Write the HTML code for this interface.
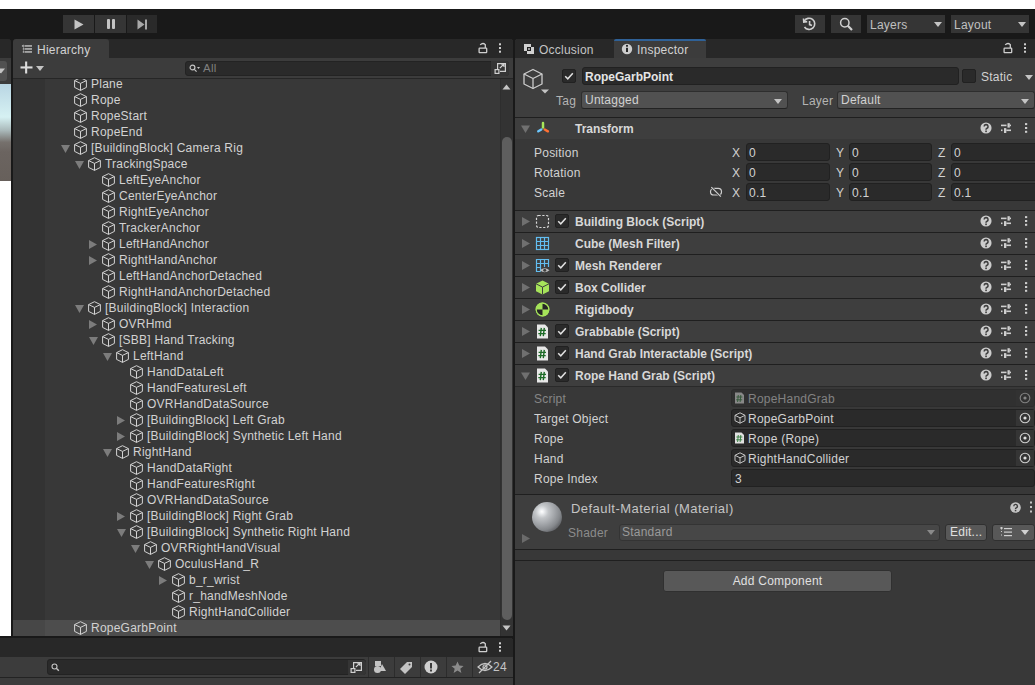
<!DOCTYPE html><html><head><meta charset="utf-8"><style>

*{box-sizing:border-box}
html,body{margin:0;padding:0}
body{width:1035px;height:685px;overflow:hidden;position:relative;background:#191919;font-family:"Liberation Sans", sans-serif;font-size:12px;letter-spacing:0.23px;color:#d2d2d2}
.a{position:absolute}
.t{position:absolute;white-space:nowrap;line-height:16px}
.b{font-weight:bold;font-size:12px;letter-spacing:0}

</style></head><body>
<div class="a" style="left:0;top:0;width:1035px;height:9px;background:#fff"></div>
<div class="a" style="left:63px;top:15px;width:31px;height:18px;background:#353535"></div>
<div class="a" style="left:95px;top:15px;width:31px;height:18px;background:#353535"></div>
<div class="a" style="left:127px;top:15px;width:30px;height:18px;background:#2a2a2a"></div>
<svg class="a" style="left:74px;top:19px" width="10" height="11"><path d="M0.5 0.5 L9.5 5.5 L0.5 10.5Z" fill="#c4c4c4"/></svg>
<div class="a" style="left:107px;top:19px;width:3px;height:10px;background:#c4c4c4;border-radius:1px"></div>
<div class="a" style="left:112px;top:19px;width:3px;height:10px;background:#c4c4c4;border-radius:1px"></div>
<svg class="a" style="left:137px;top:19px" width="11" height="11"><path d="M0.5 0.5 L7.5 5.5 L0.5 10.5Z" fill="#a8a8a8"/><rect x="8" y="0.5" width="2" height="10" fill="#a8a8a8"/></svg>
<div class="a" style="left:795px;top:15px;width:30px;height:18px;background:#353535"></div>
<svg class="a" style="left:801px;top:16px" width="17" height="16" viewBox="0 0 17 16"><g fill="none" stroke="#d0d0d0" stroke-width="1.6"><path d="M3.2 5.2 A5.6 5.6 0 1 1 3.5 11"/><path d="M2.5 2.5 L2.8 6 L6.2 5.6"/><path d="M8.6 5 L8.6 8.6 L11 9.6"/></g></svg>
<div class="a" style="left:831px;top:15px;width:30px;height:18px;background:#353535"></div>
<svg class="a" style="left:839px;top:17px" width="15" height="15" viewBox="0 0 15 15"><g fill="none" stroke="#d0d0d0"><circle cx="5.8" cy="5.8" r="4.2" stroke-width="1.5"/><path d="M8.8 8.8 L13 13" stroke-width="2.2"/></g></svg>
<div class="a" style="left:867px;top:15px;width:78px;height:18px;background:#353535"></div>
<div class="t" style="left:870px;top:17px;color:#c0c0c0">Layers</div>
<svg class="a" style="left:934px;top:22px" width="8" height="5" viewBox="0 0 8 5"><path d="M0 0 L8 0 L4 5 Z" fill="#c4c4c4"/></svg>
<div class="a" style="left:951px;top:15px;width:78px;height:18px;background:#353535"></div>
<div class="t" style="left:954px;top:17px;color:#c0c0c0">Layout</div>
<svg class="a" style="left:1018px;top:22px" width="8" height="5" viewBox="0 0 8 5"><path d="M0 0 L8 0 L4 5 Z" fill="#c4c4c4"/></svg>
<div class="a" style="left:0;top:39px;width:11px;height:597px;background:#282828;overflow:hidden;border-top-right-radius:3px"><div class="a" style="left:0;top:45px;width:11px;height:552px;background:#fff"></div><div class="a" style="left:0;top:0;width:11px;height:19px;background:#282828"></div><div class="a" style="left:0;top:19px;width:11px;height:26px;background:#3c3c3c"></div><div class="a" style="left:-6px;top:22px;width:13px;height:20px;background:#515151;border-radius:3px"></div><svg class="a" style="left:0;top:29px" width="6" height="6"><path d="M-3 0.5 L5 0.5 L1 5.5Z" fill="#c4c4c4"/></svg><div class="a" style="left:0;top:45px;width:11px;height:97px;background:linear-gradient(#b9d6e3 0%,#d6f1f3 34%,#a9b8b9 48%,#76716d 60%,#6b6460 70%,#67605b 100%)"></div></div>
<div class="a" style="left:13px;top:39px;width:500px;height:597px;background:#383838;overflow:hidden;border-top-left-radius:3px;border-top-right-radius:3px">
<div class="a" style="left:0;top:0;width:500px;height:19px;background:#282828"></div>
<div class="a" style="left:0;top:0;width:96px;height:19px;background:#3c3c3c;border-top-left-radius:3px;border-top-right-radius:3px"></div>
<svg class="a" style="left:8px;top:5px" width="12" height="11" viewBox="0 0 12 11"><g fill="#cfcfcf"><path d="M0.6 1.9 L2.6 0.6 V3.2Z"/><rect x="3.5" y="1.3" width="7.5" height="1.3"/><rect x="3.5" y="4.3" width="7.5" height="1.3"/><rect x="3.5" y="7.3" width="7.5" height="1.3"/><rect x="1.8" y="4.3" width="1.2" height="1.3"/><rect x="1.8" y="7.3" width="1.2" height="1.3"/><rect x="2" y="3.2" width="0.8" height="0.8" opacity="0.6"/><rect x="2" y="6.2" width="0.8" height="0.8" opacity="0.6"/></g></svg>
<div class="t" style="left:24px;top:3px;color:#d2d2d2">Hierarchy</div>
<svg class="a" style="left:465px;top:3px" width="10" height="12" viewBox="0 0 10 12"><g fill="none" stroke="#cfcfcf" stroke-width="1.3"><rect x="1.1" y="6.1" width="7.6" height="4.6" rx="0.6"/><path d="M2.2 2.9 Q4.8 0.2 7.3 2.6 V6"/></g></svg>
<svg class="a" style="left:485px;top:3px" width="4" height="13"><g fill="#cfcfcf"><rect x="1" y="1.3" width="2" height="2"/><rect x="1" y="5" width="2" height="2"/><rect x="1" y="8.7" width="2" height="2"/></g></svg>
<div class="a" style="left:0;top:19px;width:500px;height:20px;background:#3c3c3c"></div>
<svg class="a" style="left:7px;top:22px" width="13" height="13"><g fill="#dcdcdc"><rect x="5.1" y="0.5" width="2.1" height="12"/><rect x="0.5" y="5.4" width="12" height="2.1"/></g></svg>
<svg class="a" style="left:23px;top:27px" width="8" height="5" viewBox="0 0 8 5"><path d="M0 0 L8 0 L4 5 Z" fill="#c4c4c4"/></svg>
<div class="a" style="left:172px;top:22px;width:324px;height:15px;background:#2a2a2a;border:1px solid #232323;border-radius:3px"></div>
<div class="a" style="left:478px;top:22px;width:18px;height:15px;background:#353535;border-radius:0 3px 3px 0"></div>
<svg class="a" style="left:176px;top:25px" width="12" height="9" viewBox="0 0 12 9"><g fill="none" stroke="#c4c4c4" stroke-width="1.2"><circle cx="3.5" cy="3.5" r="2.4"/><path d="M5.3 5.3 L7.6 7.6"/></g><path d="M8 3 L11 3 L9.5 5Z" fill="#c4c4c4"/></svg>
<div class="t" style="left:190px;top:21px;color:#7f7f7f;font-size:11.5px">All</div>
<svg class="a" style="left:481px;top:23px" width="13" height="13" viewBox="0 0 13 13"><g fill="none" stroke="#d0d0d0" stroke-width="1.2"><path d="M3.6 7 V1.6 H11.4 V9.4 H6"/><rect x="1.1" y="7.6" width="3.8" height="3.8"/><path d="M5.8 6.2 L10 2 M7 2 H10 V5"/></g></svg>
<div class="a" style="left:0;top:39px;width:500px;height:1px;background:#262626"></div>
<div class="a" style="left:0;top:40px;width:500px;height:557px;overflow:hidden">
<div class="a" style="left:0;top:0;width:32px;height:557px;background:#333333"></div>
<div class="a" style="left:61px;top:-2px;width:14px;height:15px"><svg width="13" height="14" viewBox="0 0 13 14"><g fill="none" stroke="#d2d2d2" stroke-width="1" stroke-linejoin="round"><path d="M6.5 0.7 L12.4 3.6 L12.4 10.4 L6.5 13.4 L0.6 10.4 L0.6 3.6 Z"/><path d="M0.6 3.6 L6.5 6.4 L12.4 3.6 M6.5 6.4 L6.5 13.4"/></g></svg></div>
<div class="t" style="left:78px;top:-3px">Plane</div>
<div class="a" style="left:61px;top:14px;width:14px;height:15px"><svg width="13" height="14" viewBox="0 0 13 14"><g fill="none" stroke="#d2d2d2" stroke-width="1" stroke-linejoin="round"><path d="M6.5 0.7 L12.4 3.6 L12.4 10.4 L6.5 13.4 L0.6 10.4 L0.6 3.6 Z"/><path d="M0.6 3.6 L6.5 6.4 L12.4 3.6 M6.5 6.4 L6.5 13.4"/></g></svg></div>
<div class="t" style="left:78px;top:13px">Rope</div>
<div class="a" style="left:61px;top:30px;width:14px;height:15px"><svg width="13" height="14" viewBox="0 0 13 14"><g fill="none" stroke="#d2d2d2" stroke-width="1" stroke-linejoin="round"><path d="M6.5 0.7 L12.4 3.6 L12.4 10.4 L6.5 13.4 L0.6 10.4 L0.6 3.6 Z"/><path d="M0.6 3.6 L6.5 6.4 L12.4 3.6 M6.5 6.4 L6.5 13.4"/></g></svg></div>
<div class="t" style="left:78px;top:29px">RopeStart</div>
<div class="a" style="left:61px;top:46px;width:14px;height:15px"><svg width="13" height="14" viewBox="0 0 13 14"><g fill="none" stroke="#d2d2d2" stroke-width="1" stroke-linejoin="round"><path d="M6.5 0.7 L12.4 3.6 L12.4 10.4 L6.5 13.4 L0.6 10.4 L0.6 3.6 Z"/><path d="M0.6 3.6 L6.5 6.4 L12.4 3.6 M6.5 6.4 L6.5 13.4"/></g></svg></div>
<div class="t" style="left:78px;top:45px">RopeEnd</div>
<svg class="a" style="left:48px;top:66px" width="9" height="8" viewBox="0 0 9 8"><path d="M0 0 L9 0 L4.5 8 Z" fill="#7c7c7c"/></svg>
<div class="a" style="left:61px;top:62px;width:14px;height:15px"><svg width="13" height="14" viewBox="0 0 13 14"><g fill="none" stroke="#d2d2d2" stroke-width="1" stroke-linejoin="round"><path d="M6.5 0.7 L12.4 3.6 L12.4 10.4 L6.5 13.4 L0.6 10.4 L0.6 3.6 Z"/><path d="M0.6 3.6 L6.5 6.4 L12.4 3.6 M6.5 6.4 L6.5 13.4"/></g></svg></div>
<div class="t" style="left:78px;top:61px">[BuildingBlock] Camera Rig</div>
<svg class="a" style="left:62px;top:82px" width="9" height="8" viewBox="0 0 9 8"><path d="M0 0 L9 0 L4.5 8 Z" fill="#7c7c7c"/></svg>
<div class="a" style="left:75px;top:78px;width:14px;height:15px"><svg width="13" height="14" viewBox="0 0 13 14"><g fill="none" stroke="#d2d2d2" stroke-width="1" stroke-linejoin="round"><path d="M6.5 0.7 L12.4 3.6 L12.4 10.4 L6.5 13.4 L0.6 10.4 L0.6 3.6 Z"/><path d="M0.6 3.6 L6.5 6.4 L12.4 3.6 M6.5 6.4 L6.5 13.4"/></g></svg></div>
<div class="t" style="left:92px;top:77px">TrackingSpace</div>
<div class="a" style="left:89px;top:94px;width:14px;height:15px"><svg width="13" height="14" viewBox="0 0 13 14"><g fill="none" stroke="#d2d2d2" stroke-width="1" stroke-linejoin="round"><path d="M6.5 0.7 L12.4 3.6 L12.4 10.4 L6.5 13.4 L0.6 10.4 L0.6 3.6 Z"/><path d="M0.6 3.6 L6.5 6.4 L12.4 3.6 M6.5 6.4 L6.5 13.4"/></g></svg></div>
<div class="t" style="left:106px;top:93px">LeftEyeAnchor</div>
<div class="a" style="left:89px;top:110px;width:14px;height:15px"><svg width="13" height="14" viewBox="0 0 13 14"><g fill="none" stroke="#d2d2d2" stroke-width="1" stroke-linejoin="round"><path d="M6.5 0.7 L12.4 3.6 L12.4 10.4 L6.5 13.4 L0.6 10.4 L0.6 3.6 Z"/><path d="M0.6 3.6 L6.5 6.4 L12.4 3.6 M6.5 6.4 L6.5 13.4"/></g></svg></div>
<div class="t" style="left:106px;top:109px">CenterEyeAnchor</div>
<div class="a" style="left:89px;top:126px;width:14px;height:15px"><svg width="13" height="14" viewBox="0 0 13 14"><g fill="none" stroke="#d2d2d2" stroke-width="1" stroke-linejoin="round"><path d="M6.5 0.7 L12.4 3.6 L12.4 10.4 L6.5 13.4 L0.6 10.4 L0.6 3.6 Z"/><path d="M0.6 3.6 L6.5 6.4 L12.4 3.6 M6.5 6.4 L6.5 13.4"/></g></svg></div>
<div class="t" style="left:106px;top:125px">RightEyeAnchor</div>
<div class="a" style="left:89px;top:142px;width:14px;height:15px"><svg width="13" height="14" viewBox="0 0 13 14"><g fill="none" stroke="#d2d2d2" stroke-width="1" stroke-linejoin="round"><path d="M6.5 0.7 L12.4 3.6 L12.4 10.4 L6.5 13.4 L0.6 10.4 L0.6 3.6 Z"/><path d="M0.6 3.6 L6.5 6.4 L12.4 3.6 M6.5 6.4 L6.5 13.4"/></g></svg></div>
<div class="t" style="left:106px;top:141px">TrackerAnchor</div>
<svg class="a" style="left:76px;top:161px" width="8" height="9" viewBox="0 0 8 9"><path d="M0 0 L8 4.5 L0 9 Z" fill="#7c7c7c"/></svg>
<div class="a" style="left:89px;top:158px;width:14px;height:15px"><svg width="13" height="14" viewBox="0 0 13 14"><g fill="none" stroke="#d2d2d2" stroke-width="1" stroke-linejoin="round"><path d="M6.5 0.7 L12.4 3.6 L12.4 10.4 L6.5 13.4 L0.6 10.4 L0.6 3.6 Z"/><path d="M0.6 3.6 L6.5 6.4 L12.4 3.6 M6.5 6.4 L6.5 13.4"/></g></svg></div>
<div class="t" style="left:106px;top:157px">LeftHandAnchor</div>
<svg class="a" style="left:76px;top:177px" width="8" height="9" viewBox="0 0 8 9"><path d="M0 0 L8 4.5 L0 9 Z" fill="#7c7c7c"/></svg>
<div class="a" style="left:89px;top:174px;width:14px;height:15px"><svg width="13" height="14" viewBox="0 0 13 14"><g fill="none" stroke="#d2d2d2" stroke-width="1" stroke-linejoin="round"><path d="M6.5 0.7 L12.4 3.6 L12.4 10.4 L6.5 13.4 L0.6 10.4 L0.6 3.6 Z"/><path d="M0.6 3.6 L6.5 6.4 L12.4 3.6 M6.5 6.4 L6.5 13.4"/></g></svg></div>
<div class="t" style="left:106px;top:173px">RightHandAnchor</div>
<div class="a" style="left:89px;top:190px;width:14px;height:15px"><svg width="13" height="14" viewBox="0 0 13 14"><g fill="none" stroke="#d2d2d2" stroke-width="1" stroke-linejoin="round"><path d="M6.5 0.7 L12.4 3.6 L12.4 10.4 L6.5 13.4 L0.6 10.4 L0.6 3.6 Z"/><path d="M0.6 3.6 L6.5 6.4 L12.4 3.6 M6.5 6.4 L6.5 13.4"/></g></svg></div>
<div class="t" style="left:106px;top:189px">LeftHandAnchorDetached</div>
<div class="a" style="left:89px;top:206px;width:14px;height:15px"><svg width="13" height="14" viewBox="0 0 13 14"><g fill="none" stroke="#d2d2d2" stroke-width="1" stroke-linejoin="round"><path d="M6.5 0.7 L12.4 3.6 L12.4 10.4 L6.5 13.4 L0.6 10.4 L0.6 3.6 Z"/><path d="M0.6 3.6 L6.5 6.4 L12.4 3.6 M6.5 6.4 L6.5 13.4"/></g></svg></div>
<div class="t" style="left:106px;top:205px">RightHandAnchorDetached</div>
<svg class="a" style="left:62px;top:226px" width="9" height="8" viewBox="0 0 9 8"><path d="M0 0 L9 0 L4.5 8 Z" fill="#7c7c7c"/></svg>
<div class="a" style="left:75px;top:222px;width:14px;height:15px"><svg width="13" height="14" viewBox="0 0 13 14"><g fill="none" stroke="#d2d2d2" stroke-width="1" stroke-linejoin="round"><path d="M6.5 0.7 L12.4 3.6 L12.4 10.4 L6.5 13.4 L0.6 10.4 L0.6 3.6 Z"/><path d="M0.6 3.6 L6.5 6.4 L12.4 3.6 M6.5 6.4 L6.5 13.4"/></g></svg></div>
<div class="t" style="left:92px;top:221px">[BuildingBlock] Interaction</div>
<svg class="a" style="left:76px;top:241px" width="8" height="9" viewBox="0 0 8 9"><path d="M0 0 L8 4.5 L0 9 Z" fill="#7c7c7c"/></svg>
<div class="a" style="left:89px;top:238px;width:14px;height:15px"><svg width="13" height="14" viewBox="0 0 13 14"><g fill="none" stroke="#d2d2d2" stroke-width="1" stroke-linejoin="round"><path d="M6.5 0.7 L12.4 3.6 L12.4 10.4 L6.5 13.4 L0.6 10.4 L0.6 3.6 Z"/><path d="M0.6 3.6 L6.5 6.4 L12.4 3.6 M6.5 6.4 L6.5 13.4"/></g></svg></div>
<div class="t" style="left:106px;top:237px">OVRHmd</div>
<svg class="a" style="left:76px;top:258px" width="9" height="8" viewBox="0 0 9 8"><path d="M0 0 L9 0 L4.5 8 Z" fill="#7c7c7c"/></svg>
<div class="a" style="left:89px;top:254px;width:14px;height:15px"><svg width="13" height="14" viewBox="0 0 13 14"><g fill="none" stroke="#d2d2d2" stroke-width="1" stroke-linejoin="round"><path d="M6.5 0.7 L12.4 3.6 L12.4 10.4 L6.5 13.4 L0.6 10.4 L0.6 3.6 Z"/><path d="M0.6 3.6 L6.5 6.4 L12.4 3.6 M6.5 6.4 L6.5 13.4"/></g></svg></div>
<div class="t" style="left:106px;top:253px">[SBB] Hand Tracking</div>
<svg class="a" style="left:90px;top:274px" width="9" height="8" viewBox="0 0 9 8"><path d="M0 0 L9 0 L4.5 8 Z" fill="#7c7c7c"/></svg>
<div class="a" style="left:103px;top:270px;width:14px;height:15px"><svg width="13" height="14" viewBox="0 0 13 14"><g fill="none" stroke="#d2d2d2" stroke-width="1" stroke-linejoin="round"><path d="M6.5 0.7 L12.4 3.6 L12.4 10.4 L6.5 13.4 L0.6 10.4 L0.6 3.6 Z"/><path d="M0.6 3.6 L6.5 6.4 L12.4 3.6 M6.5 6.4 L6.5 13.4"/></g></svg></div>
<div class="t" style="left:120px;top:269px">LeftHand</div>
<div class="a" style="left:117px;top:286px;width:14px;height:15px"><svg width="13" height="14" viewBox="0 0 13 14"><g fill="none" stroke="#d2d2d2" stroke-width="1" stroke-linejoin="round"><path d="M6.5 0.7 L12.4 3.6 L12.4 10.4 L6.5 13.4 L0.6 10.4 L0.6 3.6 Z"/><path d="M0.6 3.6 L6.5 6.4 L12.4 3.6 M6.5 6.4 L6.5 13.4"/></g></svg></div>
<div class="t" style="left:134px;top:285px">HandDataLeft</div>
<div class="a" style="left:117px;top:302px;width:14px;height:15px"><svg width="13" height="14" viewBox="0 0 13 14"><g fill="none" stroke="#d2d2d2" stroke-width="1" stroke-linejoin="round"><path d="M6.5 0.7 L12.4 3.6 L12.4 10.4 L6.5 13.4 L0.6 10.4 L0.6 3.6 Z"/><path d="M0.6 3.6 L6.5 6.4 L12.4 3.6 M6.5 6.4 L6.5 13.4"/></g></svg></div>
<div class="t" style="left:134px;top:301px">HandFeaturesLeft</div>
<div class="a" style="left:117px;top:318px;width:14px;height:15px"><svg width="13" height="14" viewBox="0 0 13 14"><g fill="none" stroke="#d2d2d2" stroke-width="1" stroke-linejoin="round"><path d="M6.5 0.7 L12.4 3.6 L12.4 10.4 L6.5 13.4 L0.6 10.4 L0.6 3.6 Z"/><path d="M0.6 3.6 L6.5 6.4 L12.4 3.6 M6.5 6.4 L6.5 13.4"/></g></svg></div>
<div class="t" style="left:134px;top:317px">OVRHandDataSource</div>
<svg class="a" style="left:104px;top:337px" width="8" height="9" viewBox="0 0 8 9"><path d="M0 0 L8 4.5 L0 9 Z" fill="#7c7c7c"/></svg>
<div class="a" style="left:117px;top:334px;width:14px;height:15px"><svg width="13" height="14" viewBox="0 0 13 14"><g fill="none" stroke="#d2d2d2" stroke-width="1" stroke-linejoin="round"><path d="M6.5 0.7 L12.4 3.6 L12.4 10.4 L6.5 13.4 L0.6 10.4 L0.6 3.6 Z"/><path d="M0.6 3.6 L6.5 6.4 L12.4 3.6 M6.5 6.4 L6.5 13.4"/></g></svg></div>
<div class="t" style="left:134px;top:333px">[BuildingBlock] Left Grab</div>
<svg class="a" style="left:104px;top:353px" width="8" height="9" viewBox="0 0 8 9"><path d="M0 0 L8 4.5 L0 9 Z" fill="#7c7c7c"/></svg>
<div class="a" style="left:117px;top:350px;width:14px;height:15px"><svg width="13" height="14" viewBox="0 0 13 14"><g fill="none" stroke="#d2d2d2" stroke-width="1" stroke-linejoin="round"><path d="M6.5 0.7 L12.4 3.6 L12.4 10.4 L6.5 13.4 L0.6 10.4 L0.6 3.6 Z"/><path d="M0.6 3.6 L6.5 6.4 L12.4 3.6 M6.5 6.4 L6.5 13.4"/></g></svg></div>
<div class="t" style="left:134px;top:349px">[BuildingBlock] Synthetic Left Hand</div>
<svg class="a" style="left:90px;top:370px" width="9" height="8" viewBox="0 0 9 8"><path d="M0 0 L9 0 L4.5 8 Z" fill="#7c7c7c"/></svg>
<div class="a" style="left:103px;top:366px;width:14px;height:15px"><svg width="13" height="14" viewBox="0 0 13 14"><g fill="none" stroke="#d2d2d2" stroke-width="1" stroke-linejoin="round"><path d="M6.5 0.7 L12.4 3.6 L12.4 10.4 L6.5 13.4 L0.6 10.4 L0.6 3.6 Z"/><path d="M0.6 3.6 L6.5 6.4 L12.4 3.6 M6.5 6.4 L6.5 13.4"/></g></svg></div>
<div class="t" style="left:120px;top:365px">RightHand</div>
<div class="a" style="left:117px;top:382px;width:14px;height:15px"><svg width="13" height="14" viewBox="0 0 13 14"><g fill="none" stroke="#d2d2d2" stroke-width="1" stroke-linejoin="round"><path d="M6.5 0.7 L12.4 3.6 L12.4 10.4 L6.5 13.4 L0.6 10.4 L0.6 3.6 Z"/><path d="M0.6 3.6 L6.5 6.4 L12.4 3.6 M6.5 6.4 L6.5 13.4"/></g></svg></div>
<div class="t" style="left:134px;top:381px">HandDataRight</div>
<div class="a" style="left:117px;top:398px;width:14px;height:15px"><svg width="13" height="14" viewBox="0 0 13 14"><g fill="none" stroke="#d2d2d2" stroke-width="1" stroke-linejoin="round"><path d="M6.5 0.7 L12.4 3.6 L12.4 10.4 L6.5 13.4 L0.6 10.4 L0.6 3.6 Z"/><path d="M0.6 3.6 L6.5 6.4 L12.4 3.6 M6.5 6.4 L6.5 13.4"/></g></svg></div>
<div class="t" style="left:134px;top:397px">HandFeaturesRight</div>
<div class="a" style="left:117px;top:414px;width:14px;height:15px"><svg width="13" height="14" viewBox="0 0 13 14"><g fill="none" stroke="#d2d2d2" stroke-width="1" stroke-linejoin="round"><path d="M6.5 0.7 L12.4 3.6 L12.4 10.4 L6.5 13.4 L0.6 10.4 L0.6 3.6 Z"/><path d="M0.6 3.6 L6.5 6.4 L12.4 3.6 M6.5 6.4 L6.5 13.4"/></g></svg></div>
<div class="t" style="left:134px;top:413px">OVRHandDataSource</div>
<svg class="a" style="left:104px;top:433px" width="8" height="9" viewBox="0 0 8 9"><path d="M0 0 L8 4.5 L0 9 Z" fill="#7c7c7c"/></svg>
<div class="a" style="left:117px;top:430px;width:14px;height:15px"><svg width="13" height="14" viewBox="0 0 13 14"><g fill="none" stroke="#d2d2d2" stroke-width="1" stroke-linejoin="round"><path d="M6.5 0.7 L12.4 3.6 L12.4 10.4 L6.5 13.4 L0.6 10.4 L0.6 3.6 Z"/><path d="M0.6 3.6 L6.5 6.4 L12.4 3.6 M6.5 6.4 L6.5 13.4"/></g></svg></div>
<div class="t" style="left:134px;top:429px">[BuildingBlock] Right Grab</div>
<svg class="a" style="left:104px;top:450px" width="9" height="8" viewBox="0 0 9 8"><path d="M0 0 L9 0 L4.5 8 Z" fill="#7c7c7c"/></svg>
<div class="a" style="left:117px;top:446px;width:14px;height:15px"><svg width="13" height="14" viewBox="0 0 13 14"><g fill="none" stroke="#d2d2d2" stroke-width="1" stroke-linejoin="round"><path d="M6.5 0.7 L12.4 3.6 L12.4 10.4 L6.5 13.4 L0.6 10.4 L0.6 3.6 Z"/><path d="M0.6 3.6 L6.5 6.4 L12.4 3.6 M6.5 6.4 L6.5 13.4"/></g></svg></div>
<div class="t" style="left:134px;top:445px">[BuildingBlock] Synthetic Right Hand</div>
<svg class="a" style="left:118px;top:466px" width="9" height="8" viewBox="0 0 9 8"><path d="M0 0 L9 0 L4.5 8 Z" fill="#7c7c7c"/></svg>
<div class="a" style="left:131px;top:462px;width:14px;height:15px"><svg width="13" height="14" viewBox="0 0 13 14"><g fill="none" stroke="#d2d2d2" stroke-width="1" stroke-linejoin="round"><path d="M6.5 0.7 L12.4 3.6 L12.4 10.4 L6.5 13.4 L0.6 10.4 L0.6 3.6 Z"/><path d="M0.6 3.6 L6.5 6.4 L12.4 3.6 M6.5 6.4 L6.5 13.4"/></g></svg></div>
<div class="t" style="left:148px;top:461px">OVRRightHandVisual</div>
<svg class="a" style="left:132px;top:482px" width="9" height="8" viewBox="0 0 9 8"><path d="M0 0 L9 0 L4.5 8 Z" fill="#7c7c7c"/></svg>
<div class="a" style="left:145px;top:478px;width:14px;height:15px"><svg width="13" height="14" viewBox="0 0 13 14"><g fill="none" stroke="#d2d2d2" stroke-width="1" stroke-linejoin="round"><path d="M6.5 0.7 L12.4 3.6 L12.4 10.4 L6.5 13.4 L0.6 10.4 L0.6 3.6 Z"/><path d="M0.6 3.6 L6.5 6.4 L12.4 3.6 M6.5 6.4 L6.5 13.4"/></g></svg></div>
<div class="t" style="left:162px;top:477px">OculusHand_R</div>
<svg class="a" style="left:146px;top:497px" width="8" height="9" viewBox="0 0 8 9"><path d="M0 0 L8 4.5 L0 9 Z" fill="#7c7c7c"/></svg>
<div class="a" style="left:159px;top:494px;width:14px;height:15px"><svg width="13" height="14" viewBox="0 0 13 14"><g fill="none" stroke="#d2d2d2" stroke-width="1" stroke-linejoin="round"><path d="M6.5 0.7 L12.4 3.6 L12.4 10.4 L6.5 13.4 L0.6 10.4 L0.6 3.6 Z"/><path d="M0.6 3.6 L6.5 6.4 L12.4 3.6 M6.5 6.4 L6.5 13.4"/></g></svg></div>
<div class="t" style="left:176px;top:493px">b_r_wrist</div>
<div class="a" style="left:159px;top:510px;width:14px;height:15px"><svg width="13" height="14" viewBox="0 0 13 14"><g fill="none" stroke="#d2d2d2" stroke-width="1" stroke-linejoin="round"><path d="M6.5 0.7 L12.4 3.6 L12.4 10.4 L6.5 13.4 L0.6 10.4 L0.6 3.6 Z"/><path d="M0.6 3.6 L6.5 6.4 L12.4 3.6 M6.5 6.4 L6.5 13.4"/></g></svg></div>
<div class="t" style="left:176px;top:509px">r_handMeshNode</div>
<div class="a" style="left:159px;top:526px;width:14px;height:15px"><svg width="13" height="14" viewBox="0 0 13 14"><g fill="none" stroke="#d2d2d2" stroke-width="1" stroke-linejoin="round"><path d="M6.5 0.7 L12.4 3.6 L12.4 10.4 L6.5 13.4 L0.6 10.4 L0.6 3.6 Z"/><path d="M0.6 3.6 L6.5 6.4 L12.4 3.6 M6.5 6.4 L6.5 13.4"/></g></svg></div>
<div class="t" style="left:176px;top:525px">RightHandCollider</div>
<div class="a" style="left:0;top:541px;width:500px;height:16px;background:#4d4d4d"></div>
<div class="a" style="left:0;top:541px;width:32px;height:16px;background:#474747"></div>
<div class="a" style="left:61px;top:542px;width:14px;height:15px"><svg width="13" height="14" viewBox="0 0 13 14"><g fill="none" stroke="#d2d2d2" stroke-width="1" stroke-linejoin="round"><path d="M6.5 0.7 L12.4 3.6 L12.4 10.4 L6.5 13.4 L0.6 10.4 L0.6 3.6 Z"/><path d="M0.6 3.6 L6.5 6.4 L12.4 3.6 M6.5 6.4 L6.5 13.4"/></g></svg></div>
<div class="t" style="left:78px;top:541px">RopeGarbPoint</div>
</div>
<div class="a" style="left:487px;top:40px;width:13px;height:557px;background:#333333;border-left:1px solid #2e2e2e"></div>
<svg class="a" style="left:489px;top:45px" width="9" height="6"><path d="M0.5 5.5 L8.5 5.5 L4.5 0.5Z" fill="#c4c4c4"/></svg>
<div class="a" style="left:489px;top:98px;width:10px;height:483px;background:#5e5e5e;border-radius:5px"></div>
<svg class="a" style="left:489px;top:586px" width="9" height="6"><path d="M0.5 0.5 L8.5 0.5 L4.5 5.5Z" fill="#c4c4c4"/></svg>
</div>
<div class="a" style="left:0;top:638px;width:513px;height:47px;background:#383838;overflow:hidden;border-top-right-radius:3px">
<div class="a" style="left:0;top:0;width:513px;height:19px;background:#282828"></div>
<svg class="a" style="left:478px;top:3px" width="10" height="12" viewBox="0 0 10 12"><g fill="none" stroke="#cfcfcf" stroke-width="1.3"><rect x="1.1" y="6.1" width="7.6" height="4.6" rx="0.6"/><path d="M2.2 2.9 Q4.8 0.2 7.3 2.6 V6"/></g></svg>
<svg class="a" style="left:498px;top:3px" width="4" height="13"><g fill="#cfcfcf"><rect x="1" y="1.3" width="2" height="2"/><rect x="1" y="5" width="2" height="2"/><rect x="1" y="8.7" width="2" height="2"/></g></svg>
<div class="a" style="left:0;top:19px;width:513px;height:20px;background:#3c3c3c"></div>
<div class="a" style="left:47px;top:21px;width:319px;height:16px;background:#2a2a2a;border:1px solid #232323;border-radius:3px"></div>
<svg class="a" style="left:51px;top:25px" width="9" height="9" viewBox="0 0 9 9"><g fill="none" stroke="#c4c4c4" stroke-width="1.1"><circle cx="3.5" cy="3.5" r="2.5"/><path d="M5.3 5.3 L7.8 7.8" stroke-width="1.4"/></g></svg>
<div class="a" style="left:348px;top:22px;width:18px;height:15px;background:#353535;border-radius:0 3px 3px 0"></div>
<svg class="a" style="left:350px;top:23px" width="13" height="13" viewBox="0 0 13 13"><g fill="none" stroke="#d0d0d0" stroke-width="1.2"><path d="M3.6 7 V1.6 H11.4 V9.4 H6"/><rect x="1.1" y="7.6" width="3.8" height="3.8"/><path d="M5.8 6.2 L10 2 M7 2 H10 V5"/></g></svg>
<div class="a" style="left:368px;top:19px;width:1px;height:20px;background:#2c2c2c"></div>
<div class="a" style="left:394px;top:19px;width:1px;height:20px;background:#2c2c2c"></div>
<div class="a" style="left:420px;top:19px;width:1px;height:20px;background:#2c2c2c"></div>
<div class="a" style="left:446px;top:19px;width:1px;height:20px;background:#2c2c2c"></div>
<div class="a" style="left:472px;top:19px;width:1px;height:20px;background:#2c2c2c"></div>
<svg class="a" style="left:373px;top:22px" width="14" height="14" viewBox="0 0 14 14"><g fill="#c4c4c4"><rect x="2" y="1" width="6" height="5"/><circle cx="4.5" cy="9.5" r="3.5"/><path d="M9 4 L13 11 L6 11Z"/></g></svg>
<svg class="a" style="left:399px;top:23px" width="14" height="13" viewBox="0 0 14 13"><path d="M8 1 L13 1 L13 6 L6 13 L1 8 Z" fill="#c4c4c4"/><circle cx="10.5" cy="3.5" r="1" fill="#3c3c3c"/></svg>
<svg class="a" style="left:424px;top:22px" width="14" height="14" viewBox="0 0 14 14"><circle cx="7" cy="7" r="6.5" fill="#d0d0d0"/><rect x="6" y="3" width="2" height="5.5" fill="#3c3c3c"/><rect x="6" y="9.5" width="2" height="2" fill="#3c3c3c"/></svg>
<svg class="a" style="left:451px;top:23px" width="13" height="13" viewBox="0 0 13 13"><path d="M6.5 0.5 L8.3 4.6 L12.6 4.9 L9.3 7.7 L10.4 12 L6.5 9.6 L2.6 12 L3.7 7.7 L0.4 4.9 L4.7 4.6Z" fill="#8a8a8a"/></svg>
<svg class="a" style="left:477px;top:22px" width="16" height="14" viewBox="0 0 16 14"><g fill="none" stroke="#c4c4c4" stroke-width="1.2"><path d="M1 7 Q8 0 15 7 Q8 14 1 7Z"/><circle cx="8" cy="7" r="2"/><path d="M2 13 L14 1"/></g></svg>
<div class="t" style="left:493px;top:21px;color:#c4c4c4">24</div>
<div class="a" style="left:0;top:39px;width:513px;height:1px;background:#232323"></div>
<div class="a" style="left:0;top:40px;width:513px;height:7px;background:#3c3c3c"></div>
</div>
<div class="a" style="left:515px;top:39px;width:520px;height:646px;background:#383838;overflow:hidden;border-top-left-radius:3px">
<div class="a" style="left:0;top:0;width:520px;height:19px;background:#282828"></div>
<div class="a" style="left:99px;top:0;width:92px;height:19px;background:#3c3c3c;border-top:2px solid #2f6197;border-radius:2px 2px 0 0"></div>
<svg class="a" style="left:8px;top:4px" width="12" height="12" viewBox="0 0 12 12"><g fill="#d0d0d0"><rect x="1" y="1" width="7" height="7"/><rect x="4" y="4" width="7" height="7"/></g><rect x="4" y="4" width="4" height="4" fill="#1e1e1e"/><rect x="5.2" y="5.2" width="1.6" height="1.6" fill="#e0e0e0"/></svg>
<div class="t" style="left:24px;top:3px;color:#c4c4c4">Occlusion</div>
<svg class="a" style="left:106px;top:4px" width="12" height="12" viewBox="0 0 12 12"><circle cx="6" cy="6" r="5.2" fill="#cdcdcd"/><rect x="5" y="1.9" width="2" height="1.8" fill="#2a2a2a"/><rect x="5" y="4.8" width="2" height="4.2" fill="#2a2a2a"/></svg>
<div class="t" style="left:122px;top:3px;color:#d2d2d2">Inspector</div>
<svg class="a" style="left:488px;top:3px" width="10" height="12" viewBox="0 0 10 12"><g fill="none" stroke="#cfcfcf" stroke-width="1.3"><rect x="1.1" y="6.1" width="7.6" height="4.6" rx="0.6"/><path d="M2.2 2.9 Q4.8 0.2 7.3 2.6 V6"/></g></svg>
<svg class="a" style="left:508px;top:3px" width="4" height="13"><g fill="#cfcfcf"><rect x="1" y="1.3" width="2" height="2"/><rect x="1" y="5" width="2" height="2"/><rect x="1" y="8.7" width="2" height="2"/></g></svg>
<div class="a" style="left:0;top:19px;width:520px;height:59px;background:#3e3e3e"></div>
<div class="a" style="left:7px;top:29px;width:22px;height:22px"><svg width="22" height="22" viewBox="0 0 22 22"><g fill="none" stroke="#cdcdcd" stroke-width="1.3" stroke-linejoin="round"><path d="M11 1.5 L20 6 L20 16 L11 20.5 L2 16 L2 6 Z"/><path d="M2 6 L11 10.5 L20 6 M11 10.5 L11 20.5"/></g></svg></div>
<svg class="a" style="left:26px;top:50px" width="8" height="5"><path d="M0 0.5 L8 0.5 L4 4.5Z" fill="#c4c4c4"/></svg>
<div class="a" style="left:47px;top:30px;width:14px;height:14px;background:#2a2a2a;border:1px solid #212121;border-radius:2px"></div><svg class="a" style="left:49px;top:32px" width="10" height="10" viewBox="0 0 10 10"><path d="M1.2 5.2 L3.8 7.8 L8.8 2.2" fill="none" stroke="#e0e0e0" stroke-width="1.5"/></svg>
<div class="a" style="left:67px;top:28px;width:377px;height:18px;background:#2a2a2a;border:1px solid #212121;border-radius:3px"></div>
<div class="t b" style="left:70px;top:30px;color:#e4e4e4">RopeGarbPoint</div>
<div class="a" style="left:447px;top:30px;width:14px;height:14px;background:#2a2a2a;border:1px solid #212121;border-radius:2px"></div>
<div class="t" style="left:466px;top:30px">Static</div>
<svg class="a" style="left:510px;top:36px" width="8" height="5" viewBox="0 0 8 5"><path d="M0 0 L8 0 L4 5 Z" fill="#c4c4c4"/></svg>
<div class="t" style="left:41px;top:54px;color:#b4b4b4">Tag</div>
<div class="a" style="left:66px;top:52px;width:207px;height:18px;background:#515151;border:1px solid #2e2e2e;border-bottom-color:#232323;border-radius:3px"></div>
<div class="t" style="left:70px;top:53px">Untagged</div>
<svg class="a" style="left:259px;top:60px" width="8" height="5" viewBox="0 0 8 5"><path d="M0 0 L8 0 L4 5 Z" fill="#c4c4c4"/></svg>
<div class="t" style="left:287px;top:54px;color:#b4b4b4">Layer</div>
<div class="a" style="left:322px;top:52px;width:198px;height:18px;background:#515151;border:1px solid #2e2e2e;border-bottom-color:#232323;border-radius:3px"></div>
<div class="t" style="left:326px;top:53px">Default</div>
<svg class="a" style="left:506px;top:60px" width="8" height="5" viewBox="0 0 8 5"><path d="M0 0 L8 0 L4 5 Z" fill="#c4c4c4"/></svg>
<div class="a" style="left:0;top:78px;width:520px;height:1px;background:#1f1f1f"></div><div class="a" style="left:0;top:79px;width:520px;height:21px;background:#3e3e3e"></div><svg class="a" style="left:6px;top:86px" width="9" height="8"><path d="M0 0.5 L9 0.5 L4.5 8Z" fill="#707070"/></svg><div class="a" style="left:20px;top:82px;width:15px;height:15px"><svg width="15" height="15" viewBox="0 0 15 15"><g stroke-linecap="round" stroke-width="2.5"><path d="M8 1.9 V6.6" stroke="#a8e85a"/><path d="M3.3 10.3 L6.3 8.5" stroke="#6cc8ff"/><path d="M9.7 8.5 L12.9 10.3" stroke="#ff7033"/></g></svg></div><div class="t b" style="left:60px;top:82px;color:#d8d8d8">Transform</div><svg class="a" style="left:465px;top:83px" width="12" height="12" viewBox="0 0 11 11"><circle cx="5.5" cy="5.5" r="5.1" fill="#cdcdcd"/><path d="M3.8 4.2 A1.8 1.8 0 1 1 6.2 5.9 Q5.5 6.3 5.5 7" fill="none" stroke="#3e3e3e" stroke-width="1.4"/><rect x="4.8" y="7.8" width="1.5" height="1.5" fill="#3e3e3e"/></svg><svg class="a" style="left:485px;top:83px" width="12" height="12" viewBox="0 0 12 12"><g fill="#cfcfcf"><rect x="1" y="2.6" width="5.5" height="1.6"/><rect x="7.5" y="1.2" width="2.3" height="4.4"/><rect x="9.8" y="2.6" width="1.2" height="1.6"/><rect x="1" y="7.5" width="1.5" height="1.6"/><rect x="4" y="6.1" width="2.3" height="4.9"/><rect x="6.3" y="7.5" width="4.7" height="1.6"/></g></svg><svg class="a" style="left:509px;top:83px" width="4" height="13"><g fill="#cfcfcf"><rect x="1" y="1.1" width="2.2" height="2"/><rect x="1" y="5" width="2.2" height="2"/><rect x="1" y="8.8" width="2.2" height="2"/></g></svg>
<div class="t" style="left:19px;top:106px">Position</div>
<div class="t" style="left:217px;top:106px">X</div>
<div class="a" style="left:231px;top:104px;width:84px;height:18px;background:#2a2a2a;border:1px solid #212121;border-radius:3px"></div>
<div class="t" style="left:234px;top:106px">0</div>
<div class="t" style="left:321px;top:106px">Y</div>
<div class="a" style="left:334px;top:104px;width:83px;height:18px;background:#2a2a2a;border:1px solid #212121;border-radius:3px"></div>
<div class="t" style="left:337px;top:106px">0</div>
<div class="t" style="left:423px;top:106px">Z</div>
<div class="a" style="left:436px;top:104px;width:90px;height:18px;background:#2a2a2a;border:1px solid #212121;border-radius:3px"></div>
<div class="t" style="left:439px;top:106px">0</div>
<div class="t" style="left:19px;top:126px">Rotation</div>
<div class="t" style="left:217px;top:126px">X</div>
<div class="a" style="left:231px;top:124px;width:84px;height:18px;background:#2a2a2a;border:1px solid #212121;border-radius:3px"></div>
<div class="t" style="left:234px;top:126px">0</div>
<div class="t" style="left:321px;top:126px">Y</div>
<div class="a" style="left:334px;top:124px;width:83px;height:18px;background:#2a2a2a;border:1px solid #212121;border-radius:3px"></div>
<div class="t" style="left:337px;top:126px">0</div>
<div class="t" style="left:423px;top:126px">Z</div>
<div class="a" style="left:436px;top:124px;width:90px;height:18px;background:#2a2a2a;border:1px solid #212121;border-radius:3px"></div>
<div class="t" style="left:439px;top:126px">0</div>
<div class="t" style="left:19px;top:146px">Scale</div>
<div class="t" style="left:217px;top:146px">X</div>
<div class="a" style="left:231px;top:144px;width:84px;height:18px;background:#2a2a2a;border:1px solid #212121;border-radius:3px"></div>
<div class="t" style="left:234px;top:146px">0.1</div>
<div class="t" style="left:321px;top:146px">Y</div>
<div class="a" style="left:334px;top:144px;width:83px;height:18px;background:#2a2a2a;border:1px solid #212121;border-radius:3px"></div>
<div class="t" style="left:337px;top:146px">0.1</div>
<div class="t" style="left:423px;top:146px">Z</div>
<div class="a" style="left:436px;top:144px;width:90px;height:18px;background:#2a2a2a;border:1px solid #212121;border-radius:3px"></div>
<div class="t" style="left:439px;top:146px">0.1</div>
<svg class="a" style="left:194px;top:147px" width="14" height="12" viewBox="0 0 14 12"><g fill="none" stroke="#cfcfcf" stroke-width="1.2"><rect x="1.5" y="2.4" width="11" height="6.6" rx="3.3"/><path d="M2.3 1.2 L11.8 10.7" stroke="#383838" stroke-width="2.6"/><path d="M2.3 1.2 L11.8 10.7"/></g></svg>
<div class="a" style="left:0;top:171px;width:520px;height:1px;background:#1f1f1f"></div><div class="a" style="left:0;top:172px;width:520px;height:21px;background:#3e3e3e"></div><svg class="a" style="left:7px;top:178px" width="8" height="9"><path d="M0 0 L8 4.5 L0 9Z" fill="#707070"/></svg><div class="a" style="left:20px;top:175px;width:15px;height:15px"><svg width="15" height="15" viewBox="0 0 15 15"><rect x="1.5" y="1.5" width="12" height="12" rx="2" fill="none" stroke="#d8d8d8" stroke-width="1.2" stroke-dasharray="2.2 1.6"/></svg></div><div class="a" style="left:40px;top:175px;width:14px;height:14px;background:#2a2a2a;border:1px solid #212121;border-radius:2px"></div><svg class="a" style="left:42px;top:177px" width="10" height="10" viewBox="0 0 10 10"><path d="M1.2 5.2 L3.8 7.8 L8.8 2.2" fill="none" stroke="#e0e0e0" stroke-width="1.5"/></svg><div class="t b" style="left:60px;top:175px;color:#d8d8d8">Building Block (Script)</div><svg class="a" style="left:465px;top:176px" width="12" height="12" viewBox="0 0 11 11"><circle cx="5.5" cy="5.5" r="5.1" fill="#cdcdcd"/><path d="M3.8 4.2 A1.8 1.8 0 1 1 6.2 5.9 Q5.5 6.3 5.5 7" fill="none" stroke="#3e3e3e" stroke-width="1.4"/><rect x="4.8" y="7.8" width="1.5" height="1.5" fill="#3e3e3e"/></svg><svg class="a" style="left:485px;top:176px" width="12" height="12" viewBox="0 0 12 12"><g fill="#cfcfcf"><rect x="1" y="2.6" width="5.5" height="1.6"/><rect x="7.5" y="1.2" width="2.3" height="4.4"/><rect x="9.8" y="2.6" width="1.2" height="1.6"/><rect x="1" y="7.5" width="1.5" height="1.6"/><rect x="4" y="6.1" width="2.3" height="4.9"/><rect x="6.3" y="7.5" width="4.7" height="1.6"/></g></svg><svg class="a" style="left:509px;top:176px" width="4" height="13"><g fill="#cfcfcf"><rect x="1" y="1.1" width="2.2" height="2"/><rect x="1" y="5" width="2.2" height="2"/><rect x="1" y="8.8" width="2.2" height="2"/></g></svg>
<div class="a" style="left:0;top:193px;width:520px;height:1px;background:#1f1f1f"></div><div class="a" style="left:0;top:194px;width:520px;height:21px;background:#3e3e3e"></div><svg class="a" style="left:7px;top:200px" width="8" height="9"><path d="M0 0 L8 4.5 L0 9Z" fill="#707070"/></svg><div class="a" style="left:20px;top:197px;width:15px;height:15px"><svg width="15" height="15" viewBox="0 0 15 15"><g fill="none" stroke="#62bdf0" stroke-width="1.2"><rect x="1.5" y="1.5" width="12" height="12"/><path d="M5.5 1.5 V13.5 M9.5 1.5 V13.5 M1.5 5.5 H13.5 M1.5 9.5 H13.5"/></g></svg></div><div class="t b" style="left:60px;top:197px;color:#d8d8d8">Cube (Mesh Filter)</div><svg class="a" style="left:465px;top:198px" width="12" height="12" viewBox="0 0 11 11"><circle cx="5.5" cy="5.5" r="5.1" fill="#cdcdcd"/><path d="M3.8 4.2 A1.8 1.8 0 1 1 6.2 5.9 Q5.5 6.3 5.5 7" fill="none" stroke="#3e3e3e" stroke-width="1.4"/><rect x="4.8" y="7.8" width="1.5" height="1.5" fill="#3e3e3e"/></svg><svg class="a" style="left:485px;top:198px" width="12" height="12" viewBox="0 0 12 12"><g fill="#cfcfcf"><rect x="1" y="2.6" width="5.5" height="1.6"/><rect x="7.5" y="1.2" width="2.3" height="4.4"/><rect x="9.8" y="2.6" width="1.2" height="1.6"/><rect x="1" y="7.5" width="1.5" height="1.6"/><rect x="4" y="6.1" width="2.3" height="4.9"/><rect x="6.3" y="7.5" width="4.7" height="1.6"/></g></svg><svg class="a" style="left:509px;top:198px" width="4" height="13"><g fill="#cfcfcf"><rect x="1" y="1.1" width="2.2" height="2"/><rect x="1" y="5" width="2.2" height="2"/><rect x="1" y="8.8" width="2.2" height="2"/></g></svg>
<div class="a" style="left:0;top:215px;width:520px;height:1px;background:#1f1f1f"></div><div class="a" style="left:0;top:216px;width:520px;height:21px;background:#3e3e3e"></div><svg class="a" style="left:7px;top:222px" width="8" height="9"><path d="M0 0 L8 4.5 L0 9Z" fill="#707070"/></svg><div class="a" style="left:20px;top:219px;width:15px;height:15px"><svg width="15" height="15" viewBox="0 0 15 15"><g fill="none" stroke="#62bdf0" stroke-width="1.2"><path d="M5.5 13.5 H1.5 V1.5 H13.5 V9"/><path d="M5.5 1.5 V13.5 M9.5 1.5 V9 M1.5 5.5 H13.5 M1.5 9.5 H5"/></g><path d="M5 12.2 Q9.5 8.2 14.5 12.2 Q9.5 16.2 5 12.2Z" fill="#bdbdbd"/><circle cx="9.7" cy="12.2" r="1.5" fill="#3e3e3e"/></svg></div><div class="a" style="left:40px;top:219px;width:14px;height:14px;background:#2a2a2a;border:1px solid #212121;border-radius:2px"></div><svg class="a" style="left:42px;top:221px" width="10" height="10" viewBox="0 0 10 10"><path d="M1.2 5.2 L3.8 7.8 L8.8 2.2" fill="none" stroke="#e0e0e0" stroke-width="1.5"/></svg><div class="t b" style="left:60px;top:219px;color:#d8d8d8">Mesh Renderer</div><svg class="a" style="left:465px;top:220px" width="12" height="12" viewBox="0 0 11 11"><circle cx="5.5" cy="5.5" r="5.1" fill="#cdcdcd"/><path d="M3.8 4.2 A1.8 1.8 0 1 1 6.2 5.9 Q5.5 6.3 5.5 7" fill="none" stroke="#3e3e3e" stroke-width="1.4"/><rect x="4.8" y="7.8" width="1.5" height="1.5" fill="#3e3e3e"/></svg><svg class="a" style="left:485px;top:220px" width="12" height="12" viewBox="0 0 12 12"><g fill="#cfcfcf"><rect x="1" y="2.6" width="5.5" height="1.6"/><rect x="7.5" y="1.2" width="2.3" height="4.4"/><rect x="9.8" y="2.6" width="1.2" height="1.6"/><rect x="1" y="7.5" width="1.5" height="1.6"/><rect x="4" y="6.1" width="2.3" height="4.9"/><rect x="6.3" y="7.5" width="4.7" height="1.6"/></g></svg><svg class="a" style="left:509px;top:220px" width="4" height="13"><g fill="#cfcfcf"><rect x="1" y="1.1" width="2.2" height="2"/><rect x="1" y="5" width="2.2" height="2"/><rect x="1" y="8.8" width="2.2" height="2"/></g></svg>
<div class="a" style="left:0;top:237px;width:520px;height:1px;background:#1f1f1f"></div><div class="a" style="left:0;top:238px;width:520px;height:21px;background:#3e3e3e"></div><svg class="a" style="left:7px;top:244px" width="8" height="9"><path d="M0 0 L8 4.5 L0 9Z" fill="#707070"/></svg><div class="a" style="left:20px;top:241px;width:15px;height:15px"><svg width="15" height="15" viewBox="0 0 15 15"><path d="M7.5 0.5 L14 3.8 L14 11.2 L7.5 14.5 L1 11.2 L1 3.8Z" fill="#a6e35a"/><path d="M1 3.8 L7.5 7.1 L14 3.8 M7.5 7.1 V14.5" fill="none" stroke="#3e3e3e" stroke-width="1"/></svg></div><div class="a" style="left:40px;top:241px;width:14px;height:14px;background:#2a2a2a;border:1px solid #212121;border-radius:2px"></div><svg class="a" style="left:42px;top:243px" width="10" height="10" viewBox="0 0 10 10"><path d="M1.2 5.2 L3.8 7.8 L8.8 2.2" fill="none" stroke="#e0e0e0" stroke-width="1.5"/></svg><div class="t b" style="left:60px;top:241px;color:#d8d8d8">Box Collider</div><svg class="a" style="left:465px;top:242px" width="12" height="12" viewBox="0 0 11 11"><circle cx="5.5" cy="5.5" r="5.1" fill="#cdcdcd"/><path d="M3.8 4.2 A1.8 1.8 0 1 1 6.2 5.9 Q5.5 6.3 5.5 7" fill="none" stroke="#3e3e3e" stroke-width="1.4"/><rect x="4.8" y="7.8" width="1.5" height="1.5" fill="#3e3e3e"/></svg><svg class="a" style="left:485px;top:242px" width="12" height="12" viewBox="0 0 12 12"><g fill="#cfcfcf"><rect x="1" y="2.6" width="5.5" height="1.6"/><rect x="7.5" y="1.2" width="2.3" height="4.4"/><rect x="9.8" y="2.6" width="1.2" height="1.6"/><rect x="1" y="7.5" width="1.5" height="1.6"/><rect x="4" y="6.1" width="2.3" height="4.9"/><rect x="6.3" y="7.5" width="4.7" height="1.6"/></g></svg><svg class="a" style="left:509px;top:242px" width="4" height="13"><g fill="#cfcfcf"><rect x="1" y="1.1" width="2.2" height="2"/><rect x="1" y="5" width="2.2" height="2"/><rect x="1" y="8.8" width="2.2" height="2"/></g></svg>
<div class="a" style="left:0;top:259px;width:520px;height:1px;background:#1f1f1f"></div><div class="a" style="left:0;top:260px;width:520px;height:21px;background:#3e3e3e"></div><svg class="a" style="left:7px;top:266px" width="8" height="9"><path d="M0 0 L8 4.5 L0 9Z" fill="#707070"/></svg><div class="a" style="left:20px;top:263px;width:15px;height:15px"><svg width="15" height="15" viewBox="0 0 15 15"><circle cx="7.5" cy="7.5" r="6.3" fill="#a6e35a" stroke="#a6e35a" stroke-width="1.2"/><path d="M7.5 1.2 A6.3 6.3 0 0 1 13.8 7.5 H7.5Z M7.5 13.8 A6.3 6.3 0 0 1 1.2 7.5 H7.5Z" fill="#262626"/><circle cx="7.5" cy="7.5" r="6.3" fill="none" stroke="#a6e35a" stroke-width="1.2"/></svg></div><div class="t b" style="left:60px;top:263px;color:#d8d8d8">Rigidbody</div><svg class="a" style="left:465px;top:264px" width="12" height="12" viewBox="0 0 11 11"><circle cx="5.5" cy="5.5" r="5.1" fill="#cdcdcd"/><path d="M3.8 4.2 A1.8 1.8 0 1 1 6.2 5.9 Q5.5 6.3 5.5 7" fill="none" stroke="#3e3e3e" stroke-width="1.4"/><rect x="4.8" y="7.8" width="1.5" height="1.5" fill="#3e3e3e"/></svg><svg class="a" style="left:485px;top:264px" width="12" height="12" viewBox="0 0 12 12"><g fill="#cfcfcf"><rect x="1" y="2.6" width="5.5" height="1.6"/><rect x="7.5" y="1.2" width="2.3" height="4.4"/><rect x="9.8" y="2.6" width="1.2" height="1.6"/><rect x="1" y="7.5" width="1.5" height="1.6"/><rect x="4" y="6.1" width="2.3" height="4.9"/><rect x="6.3" y="7.5" width="4.7" height="1.6"/></g></svg><svg class="a" style="left:509px;top:264px" width="4" height="13"><g fill="#cfcfcf"><rect x="1" y="1.1" width="2.2" height="2"/><rect x="1" y="5" width="2.2" height="2"/><rect x="1" y="8.8" width="2.2" height="2"/></g></svg>
<div class="a" style="left:0;top:281px;width:520px;height:1px;background:#1f1f1f"></div><div class="a" style="left:0;top:282px;width:520px;height:21px;background:#3e3e3e"></div><svg class="a" style="left:7px;top:288px" width="8" height="9"><path d="M0 0 L8 4.5 L0 9Z" fill="#707070"/></svg><div class="a" style="left:20px;top:285px;width:15px;height:15px"><svg width="15" height="15" viewBox="0 0 15 15"><path d="M2 0.5 H10 L13 3.5 V14.5 H2Z" fill="#e8e8e8"/><g stroke="#1d6b27" stroke-width="1.4"><path d="M6.3 3.8 L5.3 12.2 M9.3 3.8 L8.3 12.2 M3.6 6.4 H11 M3.3 9.6 H10.7"/></g></svg></div><div class="a" style="left:40px;top:285px;width:14px;height:14px;background:#2a2a2a;border:1px solid #212121;border-radius:2px"></div><svg class="a" style="left:42px;top:287px" width="10" height="10" viewBox="0 0 10 10"><path d="M1.2 5.2 L3.8 7.8 L8.8 2.2" fill="none" stroke="#e0e0e0" stroke-width="1.5"/></svg><div class="t b" style="left:60px;top:285px;color:#d8d8d8">Grabbable (Script)</div><svg class="a" style="left:465px;top:286px" width="12" height="12" viewBox="0 0 11 11"><circle cx="5.5" cy="5.5" r="5.1" fill="#cdcdcd"/><path d="M3.8 4.2 A1.8 1.8 0 1 1 6.2 5.9 Q5.5 6.3 5.5 7" fill="none" stroke="#3e3e3e" stroke-width="1.4"/><rect x="4.8" y="7.8" width="1.5" height="1.5" fill="#3e3e3e"/></svg><svg class="a" style="left:485px;top:286px" width="12" height="12" viewBox="0 0 12 12"><g fill="#cfcfcf"><rect x="1" y="2.6" width="5.5" height="1.6"/><rect x="7.5" y="1.2" width="2.3" height="4.4"/><rect x="9.8" y="2.6" width="1.2" height="1.6"/><rect x="1" y="7.5" width="1.5" height="1.6"/><rect x="4" y="6.1" width="2.3" height="4.9"/><rect x="6.3" y="7.5" width="4.7" height="1.6"/></g></svg><svg class="a" style="left:509px;top:286px" width="4" height="13"><g fill="#cfcfcf"><rect x="1" y="1.1" width="2.2" height="2"/><rect x="1" y="5" width="2.2" height="2"/><rect x="1" y="8.8" width="2.2" height="2"/></g></svg>
<div class="a" style="left:0;top:303px;width:520px;height:1px;background:#1f1f1f"></div><div class="a" style="left:0;top:304px;width:520px;height:21px;background:#3e3e3e"></div><svg class="a" style="left:7px;top:310px" width="8" height="9"><path d="M0 0 L8 4.5 L0 9Z" fill="#707070"/></svg><div class="a" style="left:20px;top:307px;width:15px;height:15px"><svg width="15" height="15" viewBox="0 0 15 15"><path d="M2 0.5 H10 L13 3.5 V14.5 H2Z" fill="#e8e8e8"/><g stroke="#1d6b27" stroke-width="1.4"><path d="M6.3 3.8 L5.3 12.2 M9.3 3.8 L8.3 12.2 M3.6 6.4 H11 M3.3 9.6 H10.7"/></g></svg></div><div class="a" style="left:40px;top:307px;width:14px;height:14px;background:#2a2a2a;border:1px solid #212121;border-radius:2px"></div><svg class="a" style="left:42px;top:309px" width="10" height="10" viewBox="0 0 10 10"><path d="M1.2 5.2 L3.8 7.8 L8.8 2.2" fill="none" stroke="#e0e0e0" stroke-width="1.5"/></svg><div class="t b" style="left:60px;top:307px;color:#d8d8d8">Hand Grab Interactable (Script)</div><svg class="a" style="left:465px;top:308px" width="12" height="12" viewBox="0 0 11 11"><circle cx="5.5" cy="5.5" r="5.1" fill="#cdcdcd"/><path d="M3.8 4.2 A1.8 1.8 0 1 1 6.2 5.9 Q5.5 6.3 5.5 7" fill="none" stroke="#3e3e3e" stroke-width="1.4"/><rect x="4.8" y="7.8" width="1.5" height="1.5" fill="#3e3e3e"/></svg><svg class="a" style="left:485px;top:308px" width="12" height="12" viewBox="0 0 12 12"><g fill="#cfcfcf"><rect x="1" y="2.6" width="5.5" height="1.6"/><rect x="7.5" y="1.2" width="2.3" height="4.4"/><rect x="9.8" y="2.6" width="1.2" height="1.6"/><rect x="1" y="7.5" width="1.5" height="1.6"/><rect x="4" y="6.1" width="2.3" height="4.9"/><rect x="6.3" y="7.5" width="4.7" height="1.6"/></g></svg><svg class="a" style="left:509px;top:308px" width="4" height="13"><g fill="#cfcfcf"><rect x="1" y="1.1" width="2.2" height="2"/><rect x="1" y="5" width="2.2" height="2"/><rect x="1" y="8.8" width="2.2" height="2"/></g></svg>
<div class="a" style="left:0;top:325px;width:520px;height:1px;background:#1f1f1f"></div><div class="a" style="left:0;top:326px;width:520px;height:21px;background:#3e3e3e"></div><svg class="a" style="left:6px;top:333px" width="9" height="8"><path d="M0 0.5 L9 0.5 L4.5 8Z" fill="#707070"/></svg><div class="a" style="left:20px;top:329px;width:15px;height:15px"><svg width="15" height="15" viewBox="0 0 15 15"><path d="M2 0.5 H10 L13 3.5 V14.5 H2Z" fill="#e8e8e8"/><g stroke="#1d6b27" stroke-width="1.4"><path d="M6.3 3.8 L5.3 12.2 M9.3 3.8 L8.3 12.2 M3.6 6.4 H11 M3.3 9.6 H10.7"/></g></svg></div><div class="a" style="left:40px;top:329px;width:14px;height:14px;background:#2a2a2a;border:1px solid #212121;border-radius:2px"></div><svg class="a" style="left:42px;top:331px" width="10" height="10" viewBox="0 0 10 10"><path d="M1.2 5.2 L3.8 7.8 L8.8 2.2" fill="none" stroke="#e0e0e0" stroke-width="1.5"/></svg><div class="t b" style="left:60px;top:329px;color:#d8d8d8">Rope Hand Grab (Script)</div><svg class="a" style="left:465px;top:330px" width="12" height="12" viewBox="0 0 11 11"><circle cx="5.5" cy="5.5" r="5.1" fill="#cdcdcd"/><path d="M3.8 4.2 A1.8 1.8 0 1 1 6.2 5.9 Q5.5 6.3 5.5 7" fill="none" stroke="#3e3e3e" stroke-width="1.4"/><rect x="4.8" y="7.8" width="1.5" height="1.5" fill="#3e3e3e"/></svg><svg class="a" style="left:485px;top:330px" width="12" height="12" viewBox="0 0 12 12"><g fill="#cfcfcf"><rect x="1" y="2.6" width="5.5" height="1.6"/><rect x="7.5" y="1.2" width="2.3" height="4.4"/><rect x="9.8" y="2.6" width="1.2" height="1.6"/><rect x="1" y="7.5" width="1.5" height="1.6"/><rect x="4" y="6.1" width="2.3" height="4.9"/><rect x="6.3" y="7.5" width="4.7" height="1.6"/></g></svg><svg class="a" style="left:509px;top:330px" width="4" height="13"><g fill="#cfcfcf"><rect x="1" y="1.1" width="2.2" height="2"/><rect x="1" y="5" width="2.2" height="2"/><rect x="1" y="8.8" width="2.2" height="2"/></g></svg>
<div class="a" style="left:0;top:347px;width:520px;height:1px;background:#2a2a2a"></div>
<div class="t" style="left:19px;top:352px;opacity:0.5;">Script</div>
<div class="a" style="left:216px;top:350px;width:304px;height:18px;background:#2a2a2a;border:1px solid #212121;border-radius:3px;opacity:0.5;"></div>
<div class="a" style="left:219px;top:353px;width:12px;height:12px;opacity:0.5;"><svg width="11" height="12" viewBox="0 0 11 12"><path d="M1 0.5 H7.5 L10 3 V11.5 H1Z" fill="#e0e0e0"/><g stroke="#2f7a3a" stroke-width="0.9"><path d="M4.3 3 L3.6 10 M6.8 3 L6.1 10 M2.4 5 H8.4 M2.2 7.8 H8.2"/></g></svg></div>
<div class="t" style="left:233px;top:352px;opacity:0.5;">RopeHandGrab</div>
<div style="opacity:0.5;"><div class="a" style="left:501px;top:351px;width:18px;height:16px;background:#353535"></div><svg class="a" style="left:504px;top:353px" width="12" height="12" viewBox="0 0 12 12"><circle cx="6" cy="6" r="4.8" fill="none" stroke="#cfcfcf" stroke-width="1.1"/><circle cx="6" cy="6" r="1.6" fill="#e0e0e0"/></svg></div>
<div class="t" style="left:19px;top:372px;">Target Object</div>
<div class="a" style="left:216px;top:370px;width:304px;height:18px;background:#2a2a2a;border:1px solid #212121;border-radius:3px;"></div>
<div class="a" style="left:219px;top:373px;width:12px;height:12px;"><svg width="12" height="12" viewBox="0 0 12 12"><g fill="none" stroke="#c4c4c4" stroke-width="1" stroke-linejoin="round"><path d="M6 0.8 L11 3.3 L11 8.7 L6 11.2 L1 8.7 L1 3.3 Z"/><path d="M1 3.3 L6 5.8 L11 3.3 M6 5.8 L6 11.2"/></g></svg></div>
<div class="t" style="left:233px;top:372px;">RopeGarbPoint</div>
<div class="a" style="left:501px;top:371px;width:18px;height:16px;background:#353535"></div><svg class="a" style="left:504px;top:373px" width="12" height="12" viewBox="0 0 12 12"><circle cx="6" cy="6" r="4.8" fill="none" stroke="#cfcfcf" stroke-width="1.1"/><circle cx="6" cy="6" r="1.6" fill="#e0e0e0"/></svg>
<div class="t" style="left:19px;top:392px;">Rope</div>
<div class="a" style="left:216px;top:390px;width:304px;height:18px;background:#2a2a2a;border:1px solid #212121;border-radius:3px;"></div>
<div class="a" style="left:219px;top:393px;width:12px;height:12px;"><svg width="11" height="12" viewBox="0 0 11 12"><path d="M1 0.5 H7.5 L10 3 V11.5 H1Z" fill="#e0e0e0"/><g stroke="#2f7a3a" stroke-width="0.9"><path d="M4.3 3 L3.6 10 M6.8 3 L6.1 10 M2.4 5 H8.4 M2.2 7.8 H8.2"/></g></svg></div>
<div class="t" style="left:233px;top:392px;">Rope (Rope)</div>
<div class="a" style="left:501px;top:391px;width:18px;height:16px;background:#353535"></div><svg class="a" style="left:504px;top:393px" width="12" height="12" viewBox="0 0 12 12"><circle cx="6" cy="6" r="4.8" fill="none" stroke="#cfcfcf" stroke-width="1.1"/><circle cx="6" cy="6" r="1.6" fill="#e0e0e0"/></svg>
<div class="t" style="left:19px;top:412px;">Hand</div>
<div class="a" style="left:216px;top:410px;width:304px;height:18px;background:#2a2a2a;border:1px solid #212121;border-radius:3px;"></div>
<div class="a" style="left:219px;top:413px;width:12px;height:12px;"><svg width="12" height="12" viewBox="0 0 12 12"><g fill="none" stroke="#c4c4c4" stroke-width="1" stroke-linejoin="round"><path d="M6 0.8 L11 3.3 L11 8.7 L6 11.2 L1 8.7 L1 3.3 Z"/><path d="M1 3.3 L6 5.8 L11 3.3 M6 5.8 L6 11.2"/></g></svg></div>
<div class="t" style="left:233px;top:412px;">RightHandCollider</div>
<div class="a" style="left:501px;top:411px;width:18px;height:16px;background:#353535"></div><svg class="a" style="left:504px;top:413px" width="12" height="12" viewBox="0 0 12 12"><circle cx="6" cy="6" r="4.8" fill="none" stroke="#cfcfcf" stroke-width="1.1"/><circle cx="6" cy="6" r="1.6" fill="#e0e0e0"/></svg>
<div class="t" style="left:19px;top:432px">Rope Index</div>
<div class="a" style="left:216px;top:430px;width:304px;height:18px;background:#2a2a2a;border:1px solid #212121;border-radius:3px"></div>
<div class="t" style="left:220px;top:432px">3</div>
<div class="a" style="left:0;top:455px;width:520px;height:1px;background:#1f1f1f"></div>
<div class="a" style="left:0;top:456px;width:520px;height:54px;background:#3e3e3e"></div>
<div class="a" style="left:17px;top:463px;width:30px;height:30px;border-radius:50%;background:radial-gradient(circle 23px at 33% 32%,#ffffff 0%,#eef0f2 8%,#c2c5c8 28%,#a3a6aa 55%,#85888c 80%,#5c5e62 100%)"></div>
<div class="t" style="left:56px;top:462px;font-size:13px;letter-spacing:0.46px;color:#c4c4c4">Default-Material (Material)</div>
<svg class="a" style="left:495px;top:463px" width="11" height="11" viewBox="0 0 11 11"><circle cx="5.5" cy="5.5" r="5.3" fill="#c4c4c4"/><path d="M3.8 4.2 A1.8 1.8 0 1 1 6.2 5.9 Q5.5 6.3 5.5 7" fill="none" stroke="#3e3e3e" stroke-width="1.4"/><rect x="4.8" y="7.8" width="1.5" height="1.5" fill="#3e3e3e"/></svg>
<svg class="a" style="left:514px;top:462px" width="4" height="13"><g fill="#c4c4c4"><rect x="1" y="0.5" width="2" height="2"/><rect x="1" y="5" width="2" height="2"/><rect x="1" y="9.5" width="2" height="2"/></g></svg>
<svg class="a" style="left:7px;top:495px" width="8" height="9"><path d="M0 0 L8 4.5 L0 9Z" fill="#6a6a6a"/></svg>
<div class="t" style="left:53px;top:486px;color:#8c8c8c">Shader</div>
<div class="a" style="left:104px;top:485px;width:321px;height:17px;background:#474747;border:1px solid #343434;border-radius:3px"></div>
<div class="t" style="left:107px;top:485px;color:#9a9a9a">Standard</div>
<svg class="a" style="left:412px;top:491px" width="8" height="5" viewBox="0 0 8 5"><path d="M0 0 L8 0 L4 5 Z" fill="#8a8a8a"/></svg>
<div class="a" style="left:430px;top:485px;width:42px;height:17px;background:#585858;border:1px solid #303030;border-radius:3px"></div>
<div class="t" style="left:435px;top:485px;color:#e0e0e0">Edit...</div>
<div class="a" style="left:477px;top:485px;width:43px;height:17px;background:#585858;border:1px solid #303030;border-radius:3px"></div>
<svg class="a" style="left:485px;top:488px" width="12" height="11" viewBox="0 0 12 11"><g fill="#d0d0d0"><rect x="0" y="0.5" width="3" height="1"/><rect x="1" y="-0.5" width="1" height="3"/><rect x="4" y="1" width="8" height="1.2"/><rect x="1" y="4" width="1" height="1"/><rect x="4" y="4.5" width="8" height="1.2"/><rect x="1" y="7.5" width="1" height="1"/><rect x="4" y="8" width="8" height="1.2"/></g></svg>
<svg class="a" style="left:506px;top:491px" width="8" height="5" viewBox="0 0 8 5"><path d="M0 0 L8 0 L4 5 Z" fill="#d0d0d0"/></svg>
<div class="a" style="left:0;top:510px;width:520px;height:1px;background:#1f1f1f"></div>
<div class="a" style="left:0;top:521px;width:520px;height:1px;background:#1f1f1f"></div>
<div class="a" style="left:148px;top:531px;width:229px;height:22px;background:#585858;border:1px solid #303030;border-radius:3px"></div>
<div class="t" style="left:148px;top:534px;width:229px;text-align:center;color:#e0e0e0">Add Component</div>
</div>
</body></html>
